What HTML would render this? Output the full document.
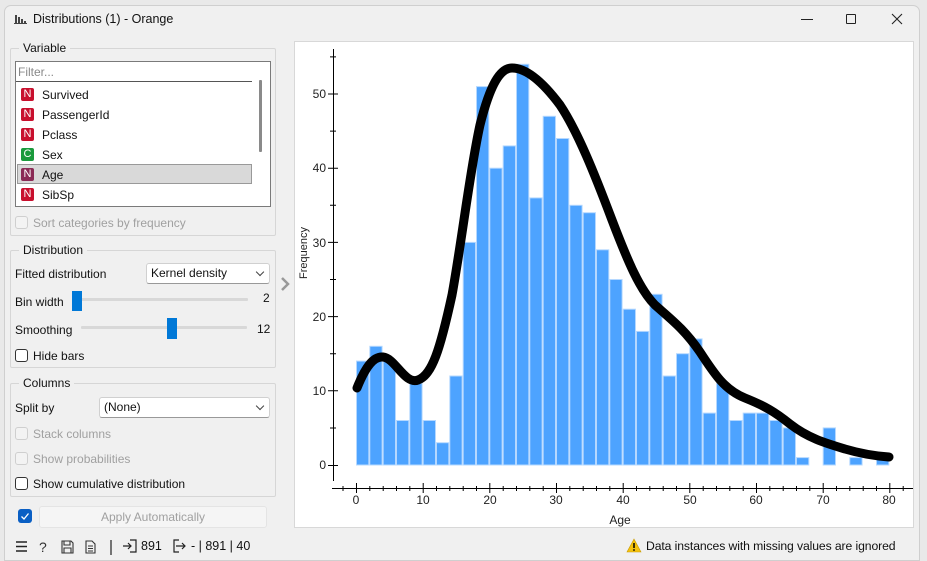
<!DOCTYPE html>
<html><head><meta charset="utf-8"><style>
*{box-sizing:border-box;margin:0;padding:0}
body{width:927px;height:561px;background:#e9e9e9;font-family:"Liberation Sans",sans-serif;font-size:12px;color:#111;position:relative;overflow:hidden}
.win{position:absolute;left:4px;top:5px;width:916px;height:556px;background:#f0f0f0;border:1px solid #cfcfcf;border-radius:7px 7px 0 0}
.a{position:absolute}
.grp{position:absolute;border:1px solid #d6d6d6;border-radius:2px}
.gt{position:absolute;background:#f0f0f0;padding:0 4px;top:-8px;left:8px;font-size:12px}
.cb{position:absolute;width:13px;height:13px;border:1px solid #333;border-radius:3px;background:#fff}
.cb.d{border-color:#cfcfcf;background:#f3f3f3}
.dis{color:#a0a0a0}
.ic{position:absolute;width:13px;height:13px;border-radius:2px;color:#fff;font-size:11px;line-height:13px;text-align:center}
.item{position:absolute;left:42px;font-size:12px}
.combo{position:absolute;background:#fff;border:1px solid #d0d0d0;border-bottom-color:#999;border-radius:3px;padding-left:4px;line-height:19px}
.combo:after{content:"";position:absolute;right:6px;top:5px;width:5px;height:5px;border-right:1px solid #444;border-bottom:1px solid #444;transform:rotate(45deg)}
</style></head><body>
<div class="win"></div>
<svg class="a" style="left:14px;top:13px" width="14" height="12"><rect x="1" y="2" width="2" height="9" fill="#444"/><rect x="4" y="4" width="2" height="7" fill="#444"/><rect x="7" y="6" width="2" height="5" fill="#444"/><rect x="10" y="8" width="2" height="3" fill="#444"/><rect x="0" y="10" width="13" height="1" fill="#444"/></svg>
<div class="a" style="left:33px;top:12px;font-size:12.5px">Distributions (1) - Orange</div>
<div class="a" style="left:801px;top:19px;width:12px;height:1px;background:#222"></div>
<div class="a" style="left:846px;top:14px;width:10px;height:10px;border:1px solid #222;border-radius:1px"></div>
<svg class="a" style="left:891px;top:13px" width="12" height="12"><path d="M1 1L11 11M11 1L1 11" stroke="#222" stroke-width="1.1"/></svg>

<div class="grp" style="left:10px;top:48px;width:266px;height:188px"><div class="gt">Variable</div></div>
<div class="a" style="left:15px;top:61px;width:256px;height:146px;border:1px solid #7a7a7a;background:#fff"></div>
<div class="a" style="left:16px;top:62px;width:236px;height:20px;border-bottom:1px solid #555;background:#fff;color:#888;padding:3px 2px">Filter...</div>
<div class="a" style="left:259px;top:80px;width:3px;height:72px;background:#8a8a8a;border-radius:1px"></div>
<div class="a" style="left:17px;top:164px;width:235px;height:20px;background:#d9d9d9;border:1px solid #999"></div>
<div class="ic" style="left:21px;top:88px;background:#c8102e">N</div><div class="item" style="top:88px">Survived</div>
<div class="ic" style="left:21px;top:108px;background:#c8102e">N</div><div class="item" style="top:108px">PassengerId</div>
<div class="ic" style="left:21px;top:128px;background:#c8102e">N</div><div class="item" style="top:128px">Pclass</div>
<div class="ic" style="left:21px;top:148px;background:#1a9a3c">C</div><div class="item" style="top:148px">Sex</div>
<div class="ic" style="left:21px;top:168px;background:#8a2a55">N</div><div class="item" style="top:168px">Age</div>
<div class="ic" style="left:21px;top:188px;background:#c8102e">N</div><div class="item" style="top:188px">SibSp</div>
<div class="cb d" style="left:15px;top:216px"></div><div class="a dis" style="left:33px;top:216px">Sort categories by frequency</div>

<div class="grp" style="left:10px;top:250px;width:266px;height:118px"><div class="gt">Distribution</div></div>
<div class="a" style="left:15px;top:267px">Fitted distribution</div>
<div class="combo" style="left:146px;top:263px;width:124px;height:21px">Kernel density</div>
<div class="a" style="left:15px;top:295px">Bin width</div>
<div class="a" style="left:80px;top:298px;width:168px;height:3px;background:#d8d8d8;border-radius:1px"></div>
<div class="a" style="left:72px;top:291px;width:10px;height:20px;background:#0078d7"></div>
<div class="a" style="left:263px;top:291px">2</div>
<div class="a" style="left:15px;top:323px">Smoothing</div>
<div class="a" style="left:81px;top:326px;width:166px;height:3px;background:#d8d8d8;border-radius:1px"></div>
<div class="a" style="left:167px;top:318px;width:10px;height:21px;background:#0078d7"></div>
<div class="a" style="left:257px;top:322px">12</div>
<div class="cb" style="left:15px;top:349px"></div><div class="a" style="left:33px;top:349px">Hide bars</div>

<div class="grp" style="left:10px;top:383px;width:266px;height:114px"><div class="gt">Columns</div></div>
<div class="a" style="left:15px;top:401px">Split by</div>
<div class="combo" style="left:99px;top:397px;width:171px;height:21px">(None)</div>
<div class="cb d" style="left:15px;top:427px"></div><div class="a dis" style="left:33px;top:427px">Stack columns</div>
<div class="cb d" style="left:15px;top:452px"></div><div class="a dis" style="left:33px;top:452px">Show probabilities</div>
<div class="cb" style="left:15px;top:477px"></div><div class="a" style="left:33px;top:477px">Show cumulative distribution</div>

<div class="a" style="left:18px;top:509px;width:14px;height:14px;background:#0a5fc4;border-radius:3px"></div>
<svg class="a" style="left:18px;top:509px" width="14" height="14"><path d="M3.5 7.5L6 10L10.5 4.5" stroke="#fff" stroke-width="1.3" fill="none"/></svg>
<div class="a dis" style="left:39px;top:506px;width:228px;height:22px;background:#f5f5f5;border:1px solid #e4e4e4;border-radius:3px;text-align:center;line-height:20px">Apply Automatically</div>

<svg class="a" style="left:280px;top:277px" width="10" height="14"><path d="M2 1L8 7L2 13" stroke="#999" stroke-width="2.5" fill="none"/></svg>

<div class="a" style="left:294px;top:41px;width:620px;height:487px;background:#fff;border:1px solid #d8d8d8"></div>
<svg class="a" style="left:0;top:0" width="927" height="561" font-family="Liberation Sans" font-size="12">
<g fill="#4da3ff" stroke="#b5d8ff" stroke-width="1">
<rect x="356.5" y="361.1" width="12.3" height="103.9"/><rect x="369.8" y="346.3" width="12.3" height="118.7"/><rect x="383.2" y="361.1" width="12.3" height="103.9"/><rect x="396.5" y="420.5" width="12.3" height="44.5"/><rect x="409.8" y="383.4" width="12.3" height="81.6"/><rect x="423.2" y="420.5" width="12.3" height="44.5"/><rect x="436.5" y="442.7" width="12.3" height="22.3"/><rect x="449.8" y="376" width="12.3" height="89"/><rect x="463.2" y="242.4" width="12.3" height="222.6"/><rect x="476.5" y="86.6" width="12.3" height="378.4"/><rect x="489.8" y="168.2" width="12.3" height="296.8"/><rect x="503.2" y="145.9" width="12.3" height="319.1"/><rect x="516.5" y="64.3" width="12.3" height="400.7"/><rect x="529.8" y="197.9" width="12.3" height="267.1"/><rect x="543.2" y="116.3" width="12.3" height="348.7"/><rect x="556.5" y="138.5" width="12.3" height="326.5"/><rect x="569.8" y="205.3" width="12.3" height="259.7"/><rect x="583.2" y="212.7" width="12.3" height="252.3"/><rect x="596.5" y="249.8" width="12.3" height="215.2"/><rect x="609.8" y="279.5" width="12.3" height="185.5"/><rect x="623.2" y="309.2" width="12.3" height="155.8"/><rect x="636.5" y="331.4" width="12.3" height="133.6"/><rect x="649.8" y="294.3" width="12.3" height="170.7"/><rect x="663.2" y="376" width="12.3" height="89"/><rect x="676.5" y="353.7" width="12.3" height="111.3"/><rect x="689.8" y="338.9" width="12.3" height="126.1"/><rect x="703.2" y="413.1" width="12.3" height="51.9"/><rect x="716.5" y="383.4" width="12.3" height="81.6"/><rect x="729.8" y="420.5" width="12.3" height="44.5"/><rect x="743.2" y="413.1" width="12.3" height="51.9"/><rect x="756.5" y="413.1" width="12.3" height="51.9"/><rect x="769.8" y="420.5" width="12.3" height="44.5"/><rect x="783.2" y="427.9" width="12.3" height="37.1"/><rect x="796.5" y="457.6" width="12.3" height="7.4"/><rect x="823.2" y="427.9" width="12.3" height="37.1"/><rect x="849.8" y="457.6" width="12.3" height="7.4"/><rect x="876.5" y="457.6" width="12.3" height="7.4"/>
</g>
<path d="M357 388 C365 368,373 356,383 357 C395 358,405 385,418 380 C432 375,440 350,452 295 C462 240,470 170,480 125 C490 85,500 68,512 68 C528 68,545 85,560 105 C578 132,595 175,612 220 C628 262,640 290,655 305 C672 320,685 330,700 352 C715 375,725 390,745 398 C765 406,775 412,790 424 C808 438,825 443,845 449 C862 454,875 456,889 457" stroke="#000" stroke-width="9" fill="none" stroke-linecap="round"/>
<g stroke="#000" stroke-width="1" fill="none">
<path d="M333.5 49V481"/><path d="M332 488.5H913"/>
<path d="M328 465.5h10M328 390.8h10M328 316.6h10M328 242.4h10M328 168.2h10M328 94h10M330 428h6M330 353.7h6M330 279.5h6M330 205.3h6M330 131.1h6M330 56.9h6"/>
<path d="M356.5 483v10M423.2 483v10M489.8 483v10M556.5 483v10M623.2 483v10M689.8 483v10M756.5 483v10M823.2 483v10M889.8 483v10"/>
<path d="M343 486v5M369.8 486v5M383.2 486v5M396.5 486v5M409.8 486v5M436.5 486v5M449.8 486v5M463.2 486v5M476.5 486v5M503.2 486v5M516.5 486v5M529.8 486v5M543.2 486v5M569.8 486v5M583.2 486v5M596.5 486v5M609.8 486v5M636.5 486v5M649.8 486v5M663.2 486v5M676.5 486v5M703.2 486v5M716.5 486v5M729.8 486v5M743.2 486v5M769.8 486v5M783.2 486v5M796.5 486v5M809.8 486v5M836.5 486v5M849.8 486v5M863.2 486v5M876.5 486v5M903.2 486v5"/>
</g>
<g fill="#222" text-anchor="end"><text x="326" y="469">0</text><text x="326" y="395">10</text><text x="326" y="321">20</text><text x="326" y="247">30</text><text x="326" y="172">40</text><text x="326" y="98">50</text></g>
<g fill="#222" text-anchor="middle"><text x="356" y="504">0</text><text x="423" y="504">10</text><text x="490" y="504">20</text><text x="556" y="504">30</text><text x="623" y="504">40</text><text x="690" y="504">50</text><text x="756" y="504">60</text><text x="823" y="504">70</text><text x="889" y="504">80</text>
<text x="620" y="524">Age</text></g>
<text transform="translate(307,253) rotate(-90)" text-anchor="middle" font-size="11" fill="#222">Frequency</text>
</svg>

<svg class="a" style="left:15px;top:539px" width="110" height="16"><path d="M1 3h11M1 7.5h11M1 12h11" stroke="#222" stroke-width="1.6"/>
<text x="24" y="13" font-size="14" font-family="Liberation Sans" fill="#333">?</text>
<path d="M47 2h9l2 2v10h-11z M49 2v4h6v-4 M49 14v-5h7v5" stroke="#333" stroke-width="1.1" fill="none"/>
<path d="M71 2h6l3 3v9h-9z M73 7h5M73 9.5h5M73 12h5" stroke="#333" stroke-width="1.1" fill="none"/>
<path d="M96 1v15" stroke="#222" stroke-width="1.2"/></svg>
<svg class="a" style="left:122px;top:538px" width="18" height="16"><path d="M8 2h6v12h-6M1 8h8M6 5l3 3-3 3" stroke="#222" stroke-width="1.2" fill="none"/></svg>
<div class="a" style="left:141px;top:539px;font-size:12.5px">891</div>
<svg class="a" style="left:172px;top:538px" width="18" height="16"><path d="M7 2h-5v12h5M4 8h9M10 5l3 3-3 3" stroke="#222" stroke-width="1.2" fill="none"/></svg>
<div class="a" style="left:191px;top:539px;font-size:12.5px">- | 891 | 40</div>
<svg class="a" style="left:626px;top:538px" width="16" height="15"><path d="M8 1L15 14H1z" fill="#f4c20d" stroke="#c99a00" stroke-width=".6"/><path d="M8 5v5" stroke="#000" stroke-width="1.5"/><circle cx="8" cy="12" r=".9"/></svg>
<div class="a" style="left:646px;top:539px;font-size:12.2px;letter-spacing:-0.1px">Data instances with missing values are ignored</div>
</body></html>
